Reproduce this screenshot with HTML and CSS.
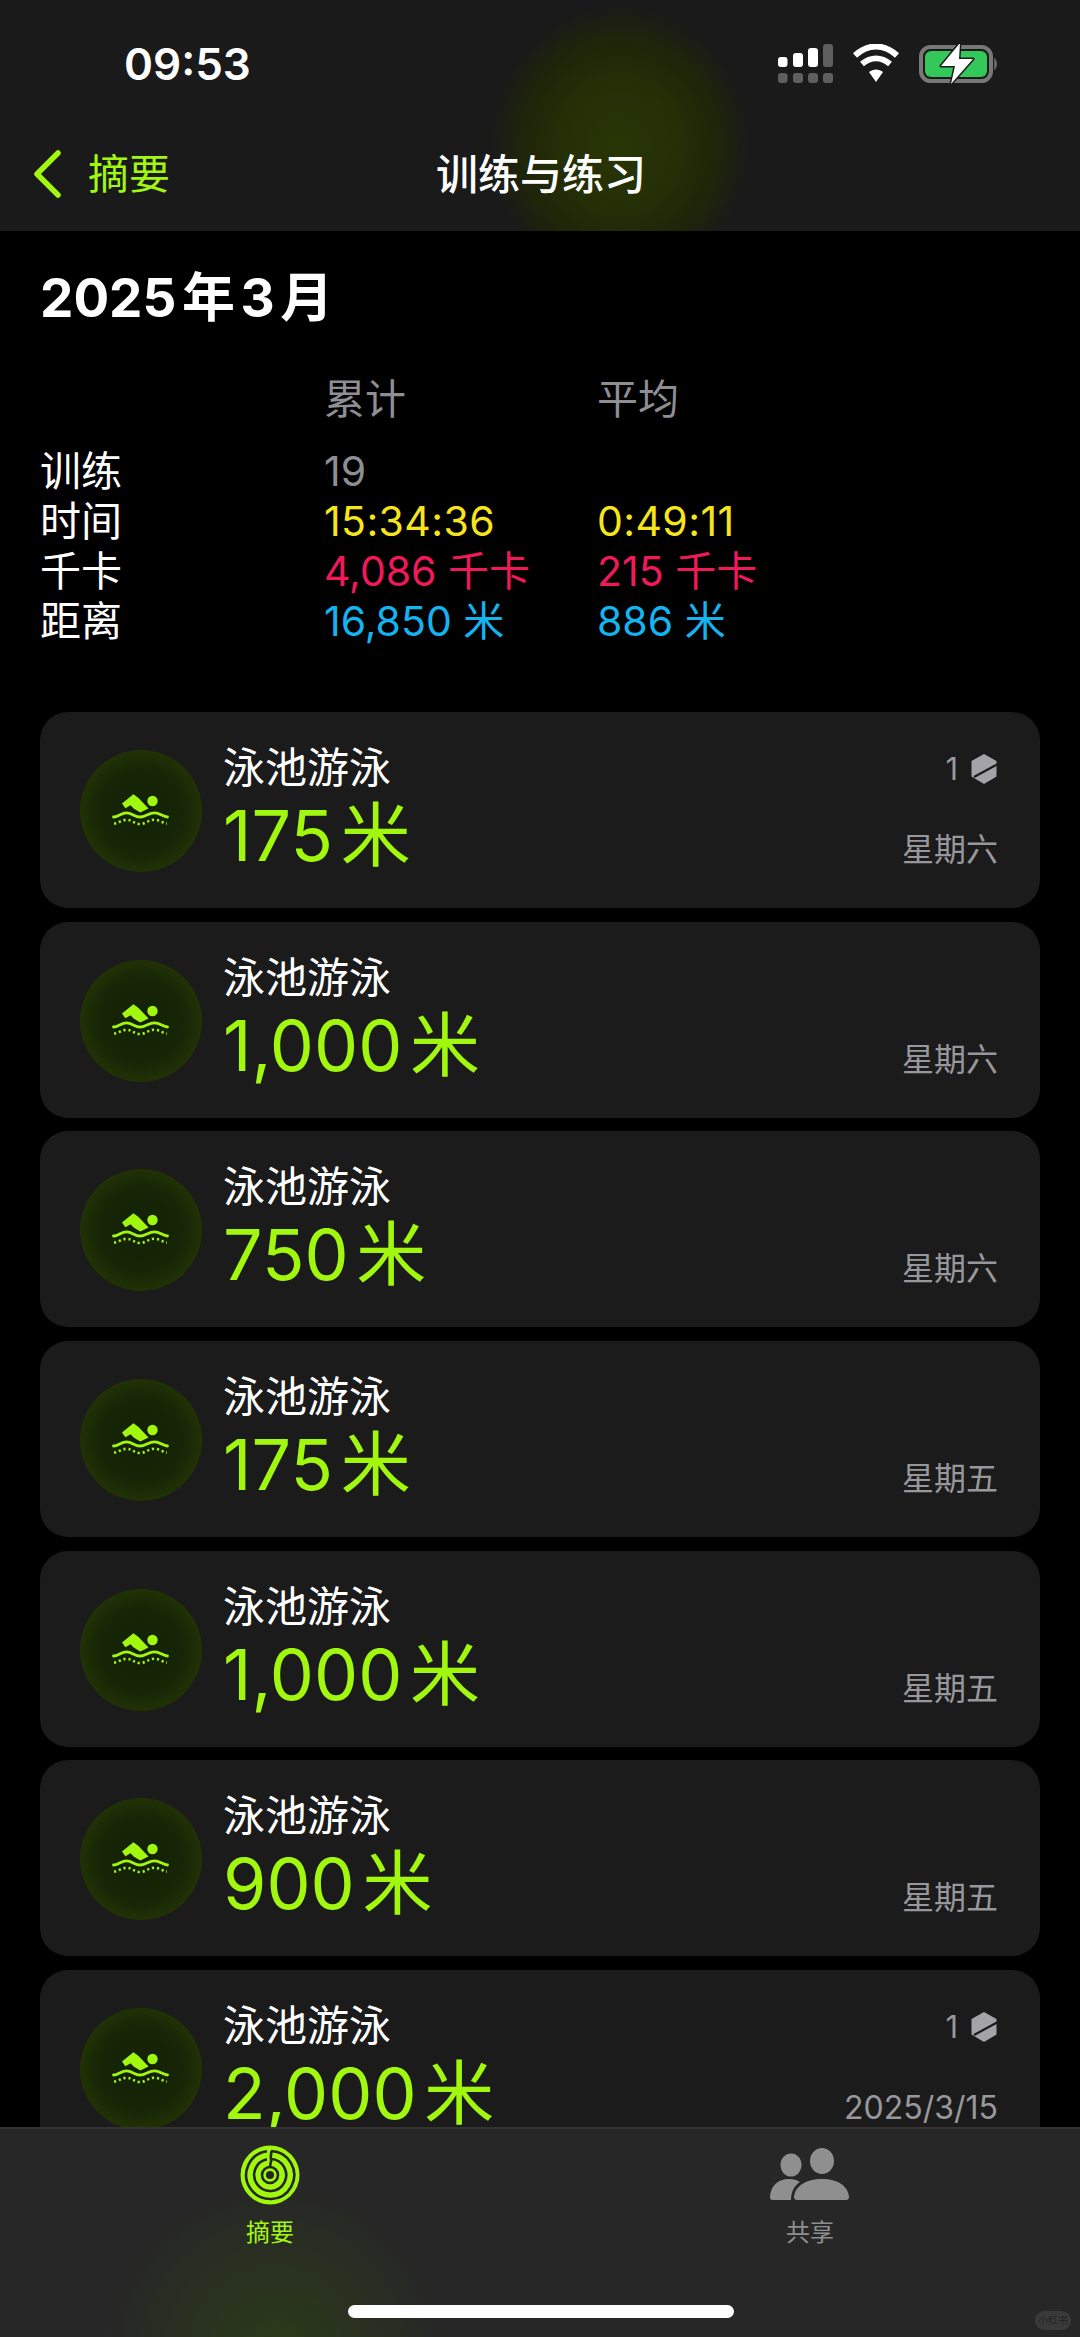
FILE: index.html
```html
<!DOCTYPE html>
<html lang="zh-CN">
<head>
<meta charset="utf-8">
<title>训练与练习</title>
<link rel="stylesheet" href="styles.css">
</head>
<body>
<svg class="defs" width="0" height="0" aria-hidden="true">
  <defs>
    <radialGradient id="disc" cx="50%" cy="50%" r="50%">
      <stop offset="0" stop-color="#132006"/>
      <stop offset="0.7" stop-color="#172606"/>
      <stop offset="1" stop-color="#213205"/>
    </radialGradient>
    <symbol id="swim" viewBox="0 0 122 122">
      <circle cx="61" cy="61" r="61" fill="url(#disc)"/>
      <circle cx="72.5" cy="51" r="5.2" fill="#a2f70f"/>
      <path d="M42 53.6 53.4 44.3 58.5 48 68.5 58.4 60.3 62.6 53.6 58.4 50.6 55.3 45.4 58.3Z" fill="#a2f70f"/>
      <path d="M33.5 67C38 67 41.500 62.800 46.500 62.800 52 62.800 54.500 67 60 67 65.500 67 68.500 62.800 74.500 62.800 80 62.800 83 67 87.500 67" fill="none" stroke="#a2f70f" stroke-width="2.800" stroke-linecap="round"/>
      <path d="M34 73.500C38 73.500 41.500 69.800 46.500 69.800 52 69.800 54.500 74 60 74 65.500 74 68.500 69.800 74.500 69.800 80 69.800 83 73.500 87 73.500" fill="none" stroke="#a2f70f" stroke-width="2.600" stroke-dasharray="2.2 2.8"/>
    </symbol>
    <symbol id="hex" viewBox="0 0 28 30">
      <path d="M14 0 26.5 7V22.5L14 30 1.5 22.5V7Z" fill="#a4a4a8"/>
      <path d="M4 23 27 10.5" stroke="#1b1b1b" stroke-width="2.2"/>
    </symbol>
  </defs>
</svg>
<div class="screen">
  <header class="topbar">
    <div class="status">
      <span class="clock">09:53</span>
      <svg class="status-icons" width="222" height="40" viewBox="778 44 222 40">
        <g fill="#fff">
          <rect x="778" y="57" width="9.500" height="10" rx="3"/>
          <rect x="793" y="53" width="10" height="14" rx="3"/>
          <rect x="808" y="48" width="10" height="19" rx="3"/>
        </g>
        <g fill="#5f5f5f">
          <rect x="823" y="44" width="10" height="23" rx="3"/>
          <rect x="778" y="73" width="9.500" height="10" rx="3"/>
          <rect x="793" y="73" width="10" height="10" rx="3"/>
          <rect x="808" y="73" width="10" height="10" rx="3"/>
          <rect x="823" y="73" width="10" height="10" rx="3"/>
        </g>
        <g fill="none" stroke="#fff" stroke-width="6">
          <path d="M855 55.500C868 43.500 884 43.500 897 55.500"/>
          <path d="M862 64C871 56.500 881 56.500 890 64"/>
        </g>
        <path d="M869 72C873 68.500 879 68.500 883 72L876 82Z" fill="#fff"/>
        <rect x="921" y="47" width="70" height="34" rx="9.500" fill="none" stroke="#777" stroke-width="4"/>
        <rect x="925" y="51" width="62" height="26" rx="6" fill="#34c759"/>
        <path d="M994 58C998 59 998 69 994 70Z" fill="#666"/>
        <path d="M960 43 941 66H955L951 84 973 59H959Z" fill="#fff" stroke="#1b1b1b" stroke-width="3" stroke-linejoin="round" paint-order="stroke"/>
      </svg>
    </div>
    <nav class="navbar">
      <a class="back">
        <svg width="30" height="48" viewBox="0 0 30 48"><path d="M26 3 5 24 26 45" fill="none" stroke="#a2f70f" stroke-width="5.500" stroke-linecap="round" stroke-linejoin="round"/></svg>
        <span>摘要</span>
      </a>
      <h1 class="nav-title">训练与练习</h1>
    </nav>
  </header>

  <main class="content">
    <h2 class="month">2025 年 3 月</h2>
    <section class="stats">
      <span></span><span class="dim">累计</span><span class="dim">平均</span>
      <span>训练</span><span class="dim">19</span><span></span>
      <span>时间</span><span class="yellow">15:34:36</span><span class="yellow">0:49:11</span>
      <span>千卡</span><span class="red">4,086 千卡</span><span class="red">215 千卡</span>
      <span>距离</span><span class="blue">16,850 米</span><span class="blue">886 米</span>
    </section>

    <ul class="list">
      <li class="card">
        <svg class="disc"><use href="#swim"/></svg>
        <div class="text"><div class="name">泳池游泳</div><div class="value">175 米</div></div>
        <div class="side"><div class="badge">1 <svg class="hex"><use href="#hex"/></svg></div><div class="when">星期六</div></div>
      </li>
      <li class="card">
        <svg class="disc"><use href="#swim"/></svg>
        <div class="text"><div class="name">泳池游泳</div><div class="value">1,000 米</div></div>
        <div class="side"><div class="when">星期六</div></div>
      </li>
      <li class="card">
        <svg class="disc"><use href="#swim"/></svg>
        <div class="text"><div class="name">泳池游泳</div><div class="value">750 米</div></div>
        <div class="side"><div class="when">星期六</div></div>
      </li>
      <li class="card">
        <svg class="disc"><use href="#swim"/></svg>
        <div class="text"><div class="name">泳池游泳</div><div class="value">175 米</div></div>
        <div class="side"><div class="when">星期五</div></div>
      </li>
      <li class="card">
        <svg class="disc"><use href="#swim"/></svg>
        <div class="text"><div class="name">泳池游泳</div><div class="value">1,000 米</div></div>
        <div class="side"><div class="when">星期五</div></div>
      </li>
      <li class="card">
        <svg class="disc"><use href="#swim"/></svg>
        <div class="text"><div class="name">泳池游泳</div><div class="value">900 米</div></div>
        <div class="side"><div class="when">星期五</div></div>
      </li>
      <li class="card">
        <svg class="disc"><use href="#swim"/></svg>
        <div class="text"><div class="name">泳池游泳</div><div class="value">2,000 米</div></div>
        <div class="side"><div class="badge">1 <svg class="hex"><use href="#hex"/></svg></div><div class="when">2025/3/15</div></div>
      </li>
    </ul>
  </main>

  <footer class="tabbar">
    <div class="tabs">
      <div class="tab tab-active">
        <svg width="60" height="60" viewBox="0 0 60 60">
          <circle cx="30" cy="30" r="29.500" fill="#a2f70f"/>
          <g fill="none" stroke="#23261f" stroke-width="2.600">
            <path d="M31 6A24 24 0 1 1 27 6.200"/>
            <path d="M31 14A16 16 0 1 1 27 14.300"/>
            <path d="M31 6C32 9 30 11 31 14"/>
            <path d="M31 14C32 18 29 19 30.500 22.500"/>
          </g>
          <circle cx="30" cy="30" r="8" fill="#a2f70f" stroke="#23261f" stroke-width="2.600"/>
          <circle cx="30" cy="30" r="4" fill="#23261f"/>
        </svg>
        <span>摘要</span>
      </div>
      <div class="tab">
        <svg width="80" height="54" viewBox="0 0 80 54">
          <ellipse cx="21" cy="17" rx="10.500" ry="11.500" fill="#8f8f8f"/>
          <ellipse cx="52" cy="13" rx="12" ry="13" fill="#8f8f8f"/>
          <path d="M0 50C0 38 8 31 19 31 24 31 27 32 30 34 24 38 21 44 21 52H3C1 52 0 51 0 50Z" fill="#8f8f8f"/>
          <path d="M27 52C25 52 24 51 24 49 25 38 36 31 52 31 68 31 78 38 79 49 79 51 78 52 76 52Z" fill="#8f8f8f"/>
        </svg>
        <span>共享</span>
      </div>
    </div>
    <div class="home"></div>
    <span class="mark">小红书</span>
  </footer>
</div>
</body>
</html>
```

FILE: styles.css
```css
* { box-sizing: border-box; }
html, body { margin: 0; padding: 0; background: #000; }
body {
  font-family: Inter, "Noto Sans CJK SC", sans-serif;
  color: #fff;
}
.defs { display: block; height: 0; }
.screen {
  width: 1080px;
  height: 2337px;
  display: flex;
  flex-direction: column;
  overflow: hidden;
  background: #000;
}
.topbar {
  height: 231px;
  flex: none;
  background:
    radial-gradient(ellipse 130px 140px at 620px 145px, #283605 0%, #242f06 45%, #1f2509 75%, rgba(26,26,26,0) 100%),
    #1a1a1a;
}
.status {
  height: 118px;
  display: flex;
  justify-content: space-between;
  align-items: flex-start;
  padding: 36px 80px 0 124px;
}
.clock { font-size: 44px; font-weight: 600; line-height: 56px; letter-spacing: 0; }
.status-icons { margin-top: 8px; }
.navbar {
  position: relative;
  height: 112px;
  display: flex;
  align-items: flex-start;
  justify-content: center;
}
.back {
  position: absolute;
  left: 32px;
  top: 32px;
  display: flex;
  align-items: center;
  gap: 26px;
  color: #a2f70f;
  font-size: 41px;
  line-height: 48px;
}
.nav-title { margin: 32px 0 0 2px; font-size: 42px; line-height: 50px; font-weight: 500; }
.content {
  flex: 1;
  min-height: 0;
  overflow: hidden;
  padding: 0 40px;
}
.month { margin: 32px 0 0; font-size: 53px; line-height: 70px; font-weight: 700; word-spacing: -7px; }
.stats {
  display: grid;
  grid-template-columns: 284px 273px 1fr;
  grid-template-rows: 72px repeat(4, 50px);
  margin-top: 41px;
  font-size: 41px;
  line-height: 50px;
}
.dim { color: #8e8e93; }
.yellow { color: #f7e51c; letter-spacing: 0.4px; }
.red { color: #f0195a; }
.blue { color: #14b4f0; }
.list {
  list-style: none;
  margin: 66px 0 0;
  padding: 0;
  display: flex;
  flex-direction: column;
  gap: 13.700px;
}
.card {
  flex: none;
  height: 196px;
  background: #1b1b1b;
  border-radius: 28px;
  display: flex;
  padding-left: 40px;
  padding-right: 42px;
}
.disc { width: 122px; height: 122px; flex: none; margin-top: 38px; }
.text { margin-left: 21px; padding-top: 31px; flex: 1; }
.name { font-size: 42px; line-height: 50px; }
.value { font-size: 70px; line-height: 86px; color: #a2f70f; word-spacing: -12px; }
.side {
  display: flex;
  flex-direction: column;
  align-items: flex-end;
  padding: 36px 0 37px;
  color: #98989c;
  font-size: 32px;
  line-height: 42px;
}
.badge { display: flex; align-items: center; gap: 12px; font-size: 31px; }
.hex { width: 28px; height: 30px; }
.when { margin-top: auto; }
.tabbar {
  position: relative;
  height: 210px;
  flex: none;
  border-top: 2px solid #333;
  background:
    radial-gradient(ellipse 170px 170px at 275px 225px, #2b3b18 0%, rgba(40,42,36,0) 100%),
    #272727;
}
.tabs { display: flex; padding-top: 16px; }
.tab {
  width: 540px;
  height: 120px;
  display: flex;
  flex-direction: column;
  align-items: center;
  color: #8f8f8f;
  font-size: 24px;
  line-height: 32px;
}
.tab svg { height: 60px; margin-bottom: 12px; }
.tab-active { color: #a2f70f; }
.home {
  position: absolute;
  left: 348px;
  top: 176px;
  width: 386px;
  height: 13px;
  border-radius: 7px;
  background: #fff;
}
.mark {
  position: absolute;
  right: 9px;
  top: 182px;
  width: 36px;
  height: 19px;
  border-radius: 10px;
  background: #3a3a3a;
  color: #222;
  font-size: 10px;
  line-height: 19px;
  text-align: center;
}
```
